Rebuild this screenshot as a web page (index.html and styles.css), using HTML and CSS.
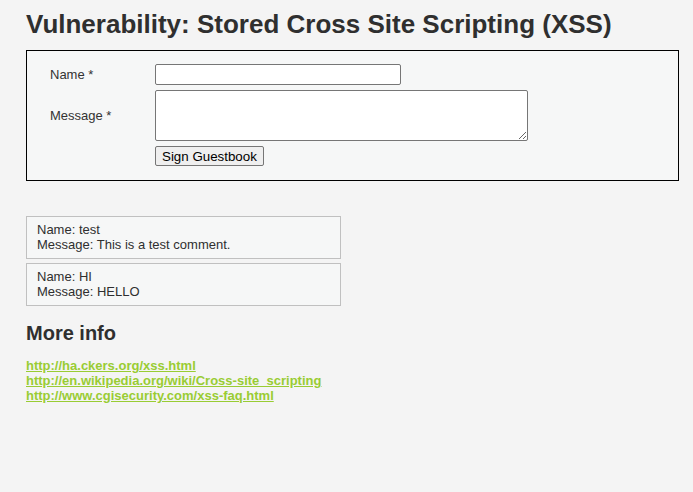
FILE: index.html
```html
<!DOCTYPE html>
<html>
<head>
<meta charset="utf-8">
<link rel="stylesheet" href="styles.css">
</head>
<body>
<div class="page">
  <h1 class="title">Vulnerability: Stored Cross Site Scripting (XSS)</h1>
  <div class="vuln-area">
    <form class="guest-form">
      <label class="label">Name *</label>
      <input class="name-input" type="text">
      <label class="label">Message *</label>
      <textarea class="msg-input"></textarea>
      <span></span>
      <div><button class="sign-btn" type="button">Sign Guestbook</button></div>
    </form>
  </div>
  <div class="comments">
    <div class="comment">Name: test<br>Message: This is a test comment.</div>
    <div class="comment">Name: HI<br>Message: HELLO</div>
  </div>
  <h2 class="subtitle">More info</h2>
  <div class="links">
    <a href="#">http://ha.ckers.org/xss.html</a>
    <a href="#">http://en.wikipedia.org/wiki/Cross-site_scripting</a>
    <a href="#">http://www.cgisecurity.com/xss-faq.html</a>
  </div>
</div>
</body>
</html>
```
FILE: styles.css
```css
html, body {
  margin: 0;
  padding: 0;
  background: #f4f4f4;
}
body {
  font-family: "Liberation Sans", Arial, sans-serif;
  font-size: 13px;
  color: #2f2f2f;
}
.page {
  padding: 0 14px 0 26px;
}
.title {
  font-size: 26px;
  font-weight: bold;
  line-height: 30px;
  margin: 9px 0 11px;
  color: #2f2f2f;
}
.vuln-area {
  background: #f6f7f7;
  border: 1px solid #000;
  padding: 13px 23px 14px;
}
.guest-form {
  display: grid;
  grid-template-columns: 105px auto;
  row-gap: 5px;
  align-items: center;
  justify-items: start;
}
.label {
  font-size: 13px;
  color: #333;
}
.name-input {
  box-sizing: border-box;
  width: 246px;
  height: 21px;
  margin: 0;
  border: 1px solid #767676;
  border-radius: 2px;
  background: #fff;
}
.msg-input {
  box-sizing: border-box;
  width: 373px;
  height: 51px;
  margin: 0;
  border: 1px solid #767676;
  border-radius: 2px;
  background: #fff;
  display: block;
}
.sign-btn {
  box-sizing: border-box;
  height: 20px;
  margin: 0;
  padding: 1px 6px 0;
  white-space: nowrap;
  font-family: "Liberation Sans", Arial, sans-serif;
  font-size: 13.33px;
  line-height: 16px;
  color: #000;
  background: #efefef;
  border: 1px solid #767676;
  border-radius: 2px;
  display: block;
}
.comments {
  margin-top: 35px;
  display: flex;
  flex-direction: column;
  gap: 4px;
}
.comment {
  width: 293px;
  border: 1px solid #c0c0c0;
  background: #f6f7f7;
  padding: 5px 10px 6px;
  line-height: 15px;
  font-size: 13px;
  color: #2f2f2f;
}
.subtitle {
  font-size: 20px;
  font-weight: bold;
  line-height: 23px;
  margin: 16px 0 13px;
  color: #2f2f2f;
}
.links {
  display: flex;
  flex-direction: column;
  align-items: flex-start;
}
.links a {
  color: #99cc33;
  font-weight: bold;
  font-size: 13px;
  line-height: 15px;
  text-decoration: underline;
}
```
